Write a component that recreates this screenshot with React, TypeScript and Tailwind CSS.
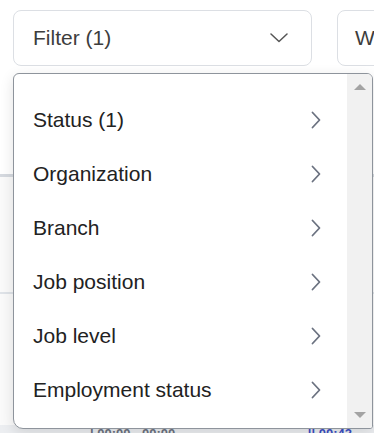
const items = ['Status (1)', 'Organization', 'Branch', 'Job position', 'Job level', 'Employment status'];

const ChevronRight = () => (
  <svg width="12" height="18" viewBox="0 0 12 18" fill="none">
    <path d="M2.5 1.5L9.5 9L2.5 16.5" stroke="#6b7280" strokeWidth="1.8" strokeLinecap="round" strokeLinejoin="round" />
  </svg>
);

const ChevronDown = () => (
  <svg width="18" height="10" viewBox="0 0 18 10" fill="none">
    <path d="M1 1L9 8.5L17 1" stroke="#555" strokeWidth="1.5" strokeLinecap="round" strokeLinejoin="round" />
  </svg>
);

export default function App() {
  return (
    <div className="relative w-[374px] h-[433px] overflow-hidden bg-white font-['Liberation_Sans',Arial,sans-serif]">
      {/* Toolbar */}
      <div className="flex pt-[10px] pl-[13px] gap-[25px]">
        <button className="w-[299px] h-[56px] shrink-0 border border-[#dcdfe4] rounded-[8px] flex items-center justify-between pl-[19px] pr-[23px] text-[21px] text-[#3d3d3d]">
          <span>Filter (1)</span>
          <ChevronDown />
        </button>
        <button className="w-[120px] h-[56px] shrink-0 border border-[#dcdfe4] rounded-[8px] flex items-center pl-[17px] text-[21px] text-[#3d3d3d]">
          <span>Week</span>
        </button>
      </div>

      {/* Background table */}
      <div className="mt-[108px] flex flex-col">
        <div className="h-[3px] bg-[#d5d9df]" />
        <div className="h-[115px] bg-[#fafafa]" />
        <div className="h-[2px] bg-[#dfe3e8]" />
        <div className="h-[131px] bg-[#fafafa]" />
        <div className="flex items-end h-[14px] bg-[#eceef1] text-[13px] leading-[10px] font-bold text-[#6b7280]">
          <span className="ml-[90px]">| 00:00 - 00:00</span>
          <span className="ml-auto mr-[22px] text-[#3b4fc4]">|| 00:42</span>
        </div>
      </div>

      {/* Dropdown */}
      <div className="absolute left-[13px] top-[73px] w-[360px] h-[356px] bg-white border border-[#8e949c] rounded-t-[6px] rounded-bl-[10px] rounded-br-[3px] shadow-[0_4px_14px_rgba(0,0,0,0.12)] overflow-hidden flex">
        <div className="flex-1 pt-[19px]">
          {items.map((label) => (
            <div key={label} className="h-[54px] flex items-center justify-between pl-[19px] pr-[25px] text-[21px] text-[#222]">
              <span>{label}</span>
              <ChevronRight />
            </div>
          ))}
        </div>
        <div className="w-[25px] bg-[#f1f1f1] flex flex-col items-center justify-between py-[10px]">
          <div className="w-0 h-0 border-l-[6px] border-r-[6px] border-b-[6px] border-l-transparent border-r-transparent border-b-[#a3a3a3]" />
          <div className="w-0 h-0 border-l-[6px] border-r-[6px] border-t-[6px] border-l-transparent border-r-transparent border-t-[#a3a3a3]" />
        </div>
      </div>
    </div>
  );
}
